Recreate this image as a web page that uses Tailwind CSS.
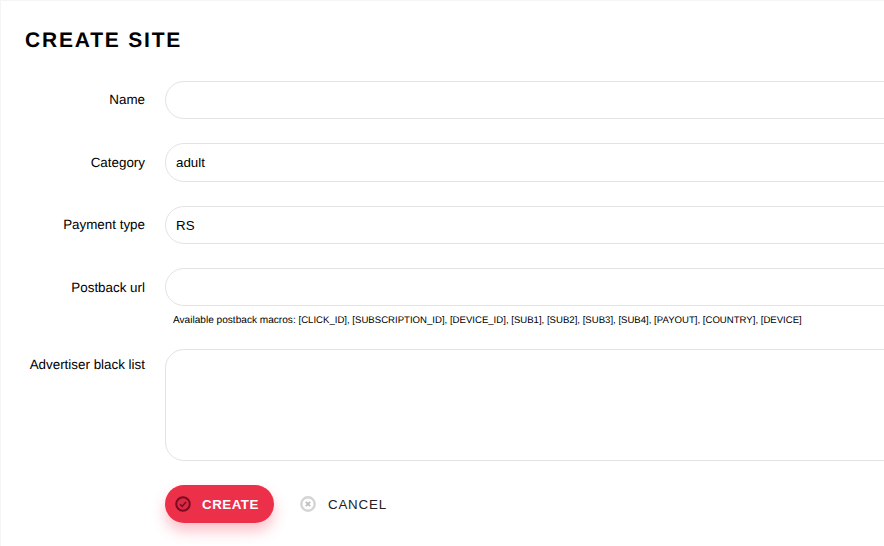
<!DOCTYPE html>
<html lang="en">
<head>
    <meta charset="UTF-8">
    <meta name="viewport" content="width=device-width, initial-scale=1.0">
    <title>Create site</title>
    <script src="https://cdn.jsdelivr.net/npm/@tailwindcss/browser@4"></script>
</head>
<body class="bg-[#f5f5f5] overflow-hidden font-['Liberation_Sans',Arial,sans-serif] text-black [text-rendering:geometricPrecision]">
    <div class="ml-px mt-px w-[883px] h-[545px] overflow-hidden bg-white pl-6 pt-[28px]">
        <h1 class="text-[21px] leading-[24px] font-bold tracking-[1.8px] uppercase">Create site</h1>

        <form class="mt-[28px] w-[1000px]">
            <!-- Name -->
            <div class="flex h-[38px] mb-[24px]">
                <label class="w-[120px] text-right text-[13.4px] leading-[38px]">Name</label>
                <input type="text" class="ml-5 w-[800px] h-[38px] rounded-[19px] border border-[#e3e3e3] bg-white px-[10px] text-[13.33px]">
            </div>
            <!-- Category -->
            <div class="flex h-[39px] mb-[24px]">
                <label class="w-[120px] text-right text-[13.4px] leading-[39px]">Category</label>
                <input type="text" value="adult" class="ml-5 w-[800px] h-[39px] rounded-[19px] border border-[#e3e3e3] bg-white px-[10px] text-[13.33px]">
            </div>
            <!-- Payment type -->
            <div class="flex h-[38px] mb-[24px]">
                <label class="w-[120px] text-right text-[13.4px] leading-[38px]">Payment type</label>
                <input type="text" value="RS" class="ml-5 w-[800px] h-[38px] rounded-[19px] border border-[#e3e3e3] bg-white px-[10px] text-[13.33px]">
            </div>
            <!-- Postback url -->
            <div class="flex h-[38px]">
                <label class="w-[120px] text-right text-[13.4px] leading-[39px]">Postback url</label>
                <input type="text" class="ml-5 w-[800px] h-[38px] rounded-[19px] border border-[#e3e3e3] bg-white px-[10px] text-[13.33px]">
            </div>
            <p class="ml-[148px] pt-[8px] h-[43px] text-[10.1px] leading-[13px]">Available postback macros: <span class="text-[9.6px]">[CLICK_ID], [SUBSCRIPTION_ID], [DEVICE_ID], [SUB1], [SUB2], [SUB3], [SUB4], [PAYOUT], [COUNTRY], [DEVICE]</span></p>
            <!-- Advertiser black list -->
            <div class="flex h-[112px] mb-[24px]">
                <label class="w-[120px] text-right text-[13.4px] leading-[32px] whitespace-nowrap">Advertiser black list</label>
                <textarea class="ml-5 w-[800px] h-[112px] rounded-[19px] border border-[#e3e3e3] bg-white px-[10px] text-[13.33px] resize-none"></textarea>
            </div>
            <!-- Buttons -->
            <div class="flex items-center ml-[140px]">
                <button type="button" class="flex items-center w-[109px] h-[38px] rounded-[19px] bg-[#ec304a] shadow-[0_8px_14px_rgba(238,46,76,0.3)] pl-[10px] text-white text-[13.33px] font-bold tracking-[0.5px]">
                    <svg class="w-4 h-4 mr-[11px]" viewBox="0 0 16 16" fill="none">
                        <circle cx="8" cy="8" r="6.8" fill="#dc2a45" stroke="#7d0a20" stroke-width="2"/>
                        <path d="M5 8.2 7.2 10.4 11 6" stroke="#7d0a20" stroke-width="1.6"/>
                    </svg>
                    <span class="pt-px">CREATE</span>
                </button>
                <button type="button" class="flex items-center ml-[26px] text-[13.33px] tracking-[0.8px] text-[#222]">
                    <svg class="w-4 h-4 mr-3" viewBox="0 0 16 16" fill="none">
                        <circle cx="8" cy="8" r="6.7" stroke="#d4d4d4" stroke-width="2.4"/>
                        <path d="M5.8 5.8 10.2 10.2M10.2 5.8 5.8 10.2" stroke="#c0c0c0" stroke-width="1.8"/>
                    </svg>
                    <span class="pt-px">CANCEL</span>
                </button>
            </div>
        </form>
    </div>
</body>
</html>
